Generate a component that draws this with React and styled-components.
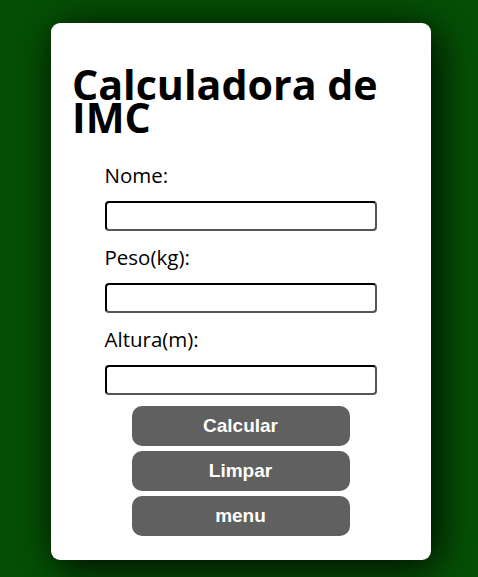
import React from "react";
import styled, { createGlobalStyle } from "styled-components";

const Global = createGlobalStyle`
  html, body { margin: 0; padding: 0; }
  body {
    background: #055005;
    min-height: 577px;
    font-family: "Open Sans", "Liberation Sans", sans-serif;
  }
`;

const Page = styled.div`
  display: flex;
  justify-content: flex-start;
  padding: 23px 0 18px 51px;
`;

const Card = styled.main`
  width: 380px;
  box-sizing: border-box;
  background: #fff;
  border-radius: 9px;
  padding: 22px 22px 24px 21px;
  box-shadow: 5px 6px 40px rgba(0, 0, 0, 0.95);
  display: flex;
  flex-direction: column;
`;

const Title = styled.h1`
  margin: 23px 0 27px;
  font-family: "Open Sans", sans-serif;
  font-weight: 700;
  font-size: 41.2px;
  line-height: 33px;
  color: #000;
  letter-spacing: 0;
`;

const Form = styled.form`
  display: flex;
  flex-direction: column;
  align-items: center;
`;

const Field = styled.div`
  width: 272px;
  display: flex;
  flex-direction: column;
  gap: 12px;
  margin-bottom: 12px;
`;

const Label = styled.label`
  font-family: "Open Sans", sans-serif;
  font-size: 20.5px;
  line-height: 27px;
  padding-top: 1px;
  color: #000;
`;

const Input = styled.input`
  box-sizing: border-box;
  width: 272px;
  height: 30px;
  border-width: 2px;
  border-style: solid;
  border-color: #000 #555 #555 #000;
  border-radius: 4px;
  background: #fff;
  padding: 0 4px;
  outline: none;
  font-size: 16px;
`;

const Buttons = styled.div`
  display: flex;
  flex-direction: column;
  gap: 5px;
  margin-top: -1px;
`;

const Button = styled.button`
  width: 218px;
  height: 40px;
  border: none;
  border-radius: 10px;
  background: #606060;
  color: #fff;
  font-family: "Liberation Sans", Arial, sans-serif;
  font-weight: 700;
  font-size: 19px;
  cursor: pointer;
`;

export default function App() {
  return (
    <>
      <Global />
      <Page>
        <Card>
          <Title>Calculadora de IMC</Title>
          <Form onSubmit={(e) => e.preventDefault()}>
            <Field>
              <Label htmlFor="nome">Nome:</Label>
              <Input id="nome" type="text" />
            </Field>
            <Field>
              <Label htmlFor="peso">Peso(kg):</Label>
              <Input id="peso" type="text" />
            </Field>
            <Field>
              <Label htmlFor="altura">Altura(m):</Label>
              <Input id="altura" type="text" />
            </Field>
            <Buttons>
              <Button type="button">Calcular</Button>
              <Button type="button">Limpar</Button>
              <Button type="button">menu</Button>
            </Buttons>
          </Form>
        </Card>
      </Page>
    </>
  );
}
